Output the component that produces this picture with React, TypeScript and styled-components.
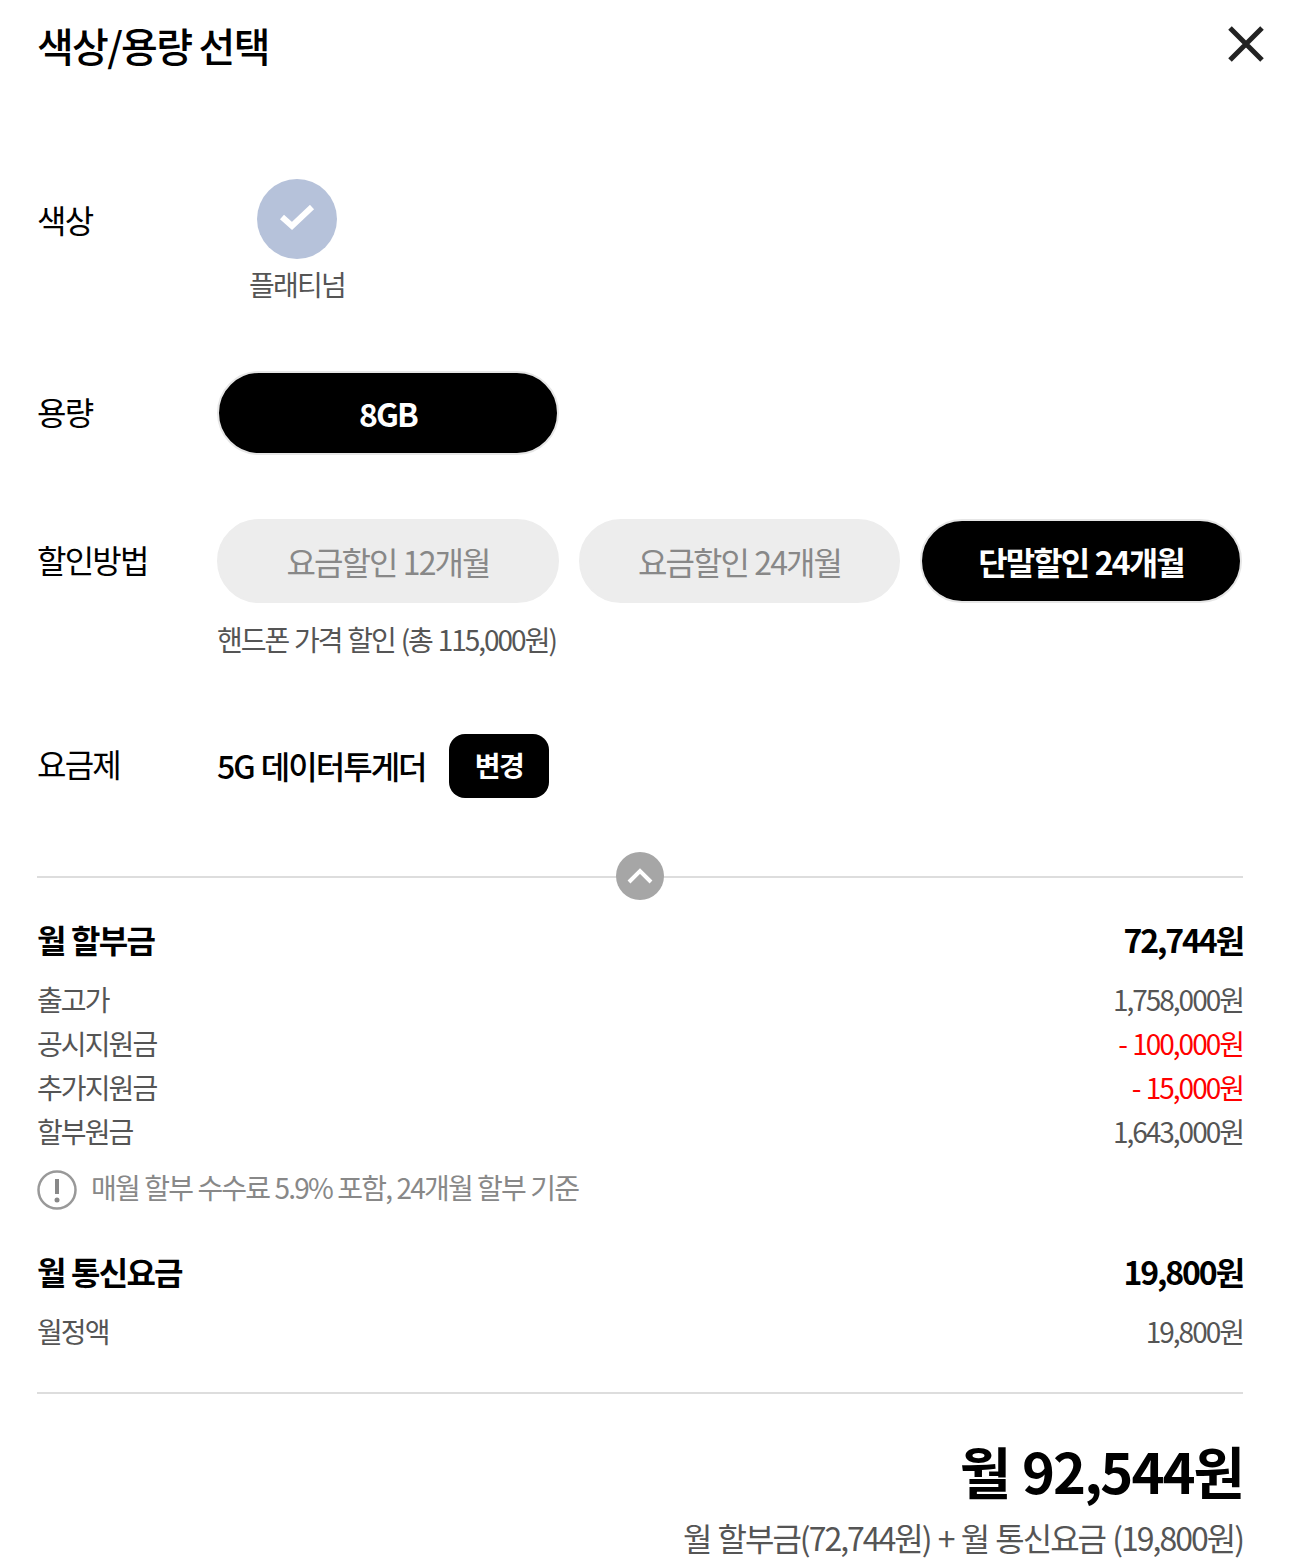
import styled, { createGlobalStyle } from 'styled-components';

const Global = createGlobalStyle`
  html, body { margin: 0; padding: 0; background: #fff; }
  body { font-family: "Noto Sans CJK KR", "Noto Sans", sans-serif; color: #000; }
`;

const Page = styled.div`
  width: 1294px;
  height: 1564px;
  overflow: hidden;
  box-sizing: border-box;
  padding: 0 51px 0 37px;
`;

const Header = styled.div`
  height: 90px;
  display: flex;
  align-items: center;
  justify-content: space-between;
  margin-right: -30px;
`;

const Title = styled.h1`
  margin: 0;
  font-size: 40px;
  font-weight: 500;
  letter-spacing: -1.7px;
  line-height: 88px;
`;

const Close = styled.svg`
  width: 38px;
  height: 38px;
  margin: 0 8px 3px 0;
`;

const Row = styled.div<{ $top: number }>`
  display: grid;
  grid-template-columns: 180px 1fr;
  margin-top: ${p => p.$top}px;
`;

const Label = styled.div<{ $h: number; $lift: number }>`
  font-size: 32px;
  letter-spacing: -1.8px;
  height: ${p => p.$h}px;
  line-height: ${p => p.$h - p.$lift}px;
`;

const Swatch = styled.div`
  width: 160px;
  display: flex;
  flex-direction: column;
  align-items: center;
`;

const Circle = styled.div`
  width: 80px;
  height: 80px;
  border-radius: 50%;
  background: #b6c2da;
  display: flex;
  align-items: center;
  justify-content: center;
`;

const SwatchName = styled.div`
  font-size: 28px;
  letter-spacing: -1.7px;
  color: #555;
  line-height: 50px;
`;

const Pills = styled.div`
  display: flex;
  gap: 20px;
`;

const Pill = styled.div<{ $w: number; $on?: boolean }>`
  width: ${p => p.$w}px;
  height: 84px;
  box-sizing: border-box;
  border-radius: 42px;
  display: flex;
  align-items: center;
  justify-content: center;
  font-size: 32px;
  letter-spacing: -1.9px;
  word-spacing: 1px;
  background: ${p => (p.$on ? '#000' : '#ededed')};
  color: ${p => (p.$on ? '#fff' : '#888')};
  font-weight: ${p => (p.$on ? 700 : 400)};
  border: 2px solid ${p => (p.$on ? '#e6e6e6' : '#ededed')};
`;

const Note = styled.div`
  font-size: 28px;
  letter-spacing: -2px;
  word-spacing: 1.5px;
  color: #555;
  line-height: 40px;
  margin-top: 16px;
`;

const PlanLine = styled.div`
  display: flex;
  align-items: center;
  gap: 23px;
  height: 64px;
`;

const PlanName = styled.div`
  font-size: 32px;
  font-weight: 500;
  letter-spacing: -2px;
  word-spacing: 2px;
  line-height: 46px;
  margin-bottom: 2px;
`;

const SmallBtn = styled.div`
  width: 100px;
  height: 64px;
  box-sizing: border-box;
  padding: 0 0 2px 1px;
  border-radius: 16px;
  background: #000;
  color: #fff;
  font-size: 28px;
  font-weight: 700;
  letter-spacing: -1.4px;
  display: flex;
  align-items: center;
  justify-content: center;
`;

const Fold = styled.div`
  position: relative;
  height: 2px;
  background: #ddd;
  margin-top: 78px;
`;

const FoldBtn = styled.div`
  position: absolute;
  left: 579px;
  top: -24px;
  width: 48px;
  height: 48px;
  border-radius: 50%;
  background: #a6a6a6;
  display: flex;
  align-items: center;
  justify-content: center;
`;

const Line = styled.div<{ $h: number; $top?: number }>`
  display: flex;
  justify-content: space-between;
  align-items: center;
  height: ${p => p.$h}px;
  margin-top: ${p => p.$top ?? 0}px;
`;

const Head = styled.div`
  font-size: 32px;
  font-weight: 700;
  letter-spacing: -1.8px;
  word-spacing: 1px;
`;

const HeadAmount = styled(Head)`
  letter-spacing: -2.1px;
`;

const Cell = styled.div`
  font-size: 28px;
  letter-spacing: -1.9px;
  color: #555;
`;

const Amount = styled(Cell)<{ $red?: boolean }>`
  letter-spacing: -2px;
  word-spacing: ${p => (p.$red ? '2px' : '0')};
  color: ${p => (p.$red ? '#f00' : '#555')};
`;

const Info = styled.div`
  display: flex;
  align-items: center;
  gap: 14px;
  height: 44px;
  margin-top: 12px;
  font-size: 28px;
  letter-spacing: -1.8px;
  word-spacing: 0.8px;
  color: #888;
`;

const InfoIcon = styled.svg`
  width: 40px;
  height: 40px;
  margin-top: 6px;
`;

const Rule = styled.div`
  height: 2px;
  background: #ddd;
  margin-top: 39px;
`;

const Total = styled.div`
  text-align: right;
  font-size: 56px;
  font-weight: 700;
  letter-spacing: -2px;
  word-spacing: 2px;
  line-height: 80px;
  margin-top: 36px;
`;

const Formula = styled.div`
  text-align: right;
  font-size: 32px;
  letter-spacing: -2px;
  word-spacing: 2px;
  color: #555;
  line-height: 50px;
  margin-top: 2px;
`;

export default function App() {
  return (
    <Page>
      <Global />
      <Header>
        <Title>색상/용량 선택</Title>
        <Close viewBox="0 0 38 38" fill="none" stroke="#222" strokeWidth="5">
          <path d="M3 3L35 35M35 3L3 35" />
        </Close>
      </Header>

      <Row $top={89}>
        <Label $h={80} $lift={0}>색상</Label>
        <Swatch>
          <Circle>
            <svg width="36" height="28" viewBox="0 0 36 28" fill="none" stroke="#fff" strokeWidth="6">
              <path d="M3 12L13 21L33 2" />
            </svg>
          </Circle>
          <SwatchName>플래티넘</SwatchName>
        </Swatch>
      </Row>

      <Row $top={62}>
        <Label $h={84} $lift={4}>용량</Label>
        <Pills>
          <Pill $w={342} $on>8GB</Pill>
        </Pills>
      </Row>

      <Row $top={64}>
        <Label $h={84} $lift={4}>할인방법</Label>
        <div>
          <Pills>
            <Pill $w={342}>요금할인 12개월</Pill>
            <Pill $w={321}>요금할인 24개월</Pill>
            <Pill $w={322} $on>단말할인 24개월</Pill>
          </Pills>
          <Note>핸드폰 가격 할인 (총 115,000원)</Note>
        </div>
      </Row>

      <Row $top={75}>
        <Label $h={64} $lift={6}>요금제</Label>
        <PlanLine>
          <PlanName>5G 데이터투게더</PlanName>
          <SmallBtn>변경</SmallBtn>
        </PlanLine>
      </Row>

      <Fold>
        <FoldBtn>
          <svg width="26" height="16" viewBox="0 0 26 16" fill="none" stroke="#fff" strokeWidth="4">
            <path d="M2 14L13 3L24 14" />
          </svg>
        </FoldBtn>
      </Fold>

      <Line $h={60} $top={31}>
        <Head>월 할부금</Head>
        <HeadAmount>72,744원</HeadAmount>
      </Line>
      <Line $h={44} $top={8}><Cell>출고가</Cell><Amount>1,758,000원</Amount></Line>
      <Line $h={44}><Cell>공시지원금</Cell><Amount $red>- 100,000원</Amount></Line>
      <Line $h={44}><Cell>추가지원금</Cell><Amount $red>- 15,000원</Amount></Line>
      <Line $h={44}><Cell>할부원금</Cell><Amount>1,643,000원</Amount></Line>
      <Info>
        <InfoIcon viewBox="0 0 40 40" fill="none">
          <circle cx="20" cy="20" r="18.5" stroke="#999" strokeWidth="2.5" />
          <path d="M20 9V24" stroke="#888" strokeWidth="4" />
          <circle cx="20" cy="30" r="2.5" fill="#888" />
        </InfoIcon>
        매월 할부 수수료 5.9% 포함, 24개월 할부 기준
      </Info>

      <Line $h={60} $top={32}>
        <Head>월 통신요금</Head>
        <HeadAmount>19,800원</HeadAmount>
      </Line>
      <Line $h={44} $top={8}><Cell>월정액</Cell><Amount>19,800원</Amount></Line>

      <Rule />
      <Total>월 92,544원</Total>
      <Formula>월 할부금(72,744원) + 월 통신요금 (19,800원)</Formula>
    </Page>
  );
}
